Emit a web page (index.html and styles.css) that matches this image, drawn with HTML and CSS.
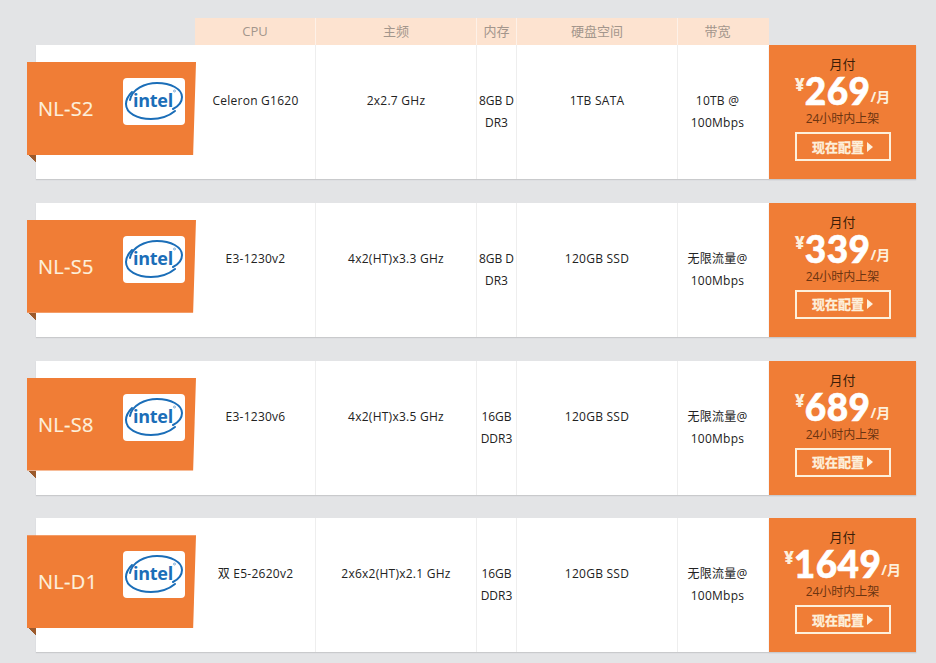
FILE: index.html
```html
<!DOCTYPE html>
<html lang="zh">
<head>
<meta charset="utf-8">
<title>服务器价格</title>
<link rel="stylesheet" href="styles.css">
</head>
<body>
<div class="head">
  <div class="h c1">CPU</div><div class="h c2">主频</div><div class="h c3">内存</div><div class="h c4">硬盘空间</div><div class="h c5">带宽</div>
</div>

<div class="row">
  <div class="lead"></div>
  <div class="ribbon"><span class="name">NL-S2</span>
    <svg class="logo" viewBox="0 0 62 47"><path class="sw" d="M7 22C9 11 22 5 34 5C48 5 59 11 59 19C59 24 56 28 50 31"/><path class="sw" d="M9 14C5 18 3 22 3 26C3 35 14 41 28 41C38 41 46 38 52 33"/><text class="it" x="30" y="29">intel</text><circle class="reg" cx="51.500" cy="13" r="1"/></svg>
  </div>
  <div class="cell c1"><p>Celeron G1620</p></div>
  <div class="cell c2"><p>2x2.7 GHz</p></div>
  <div class="cell c3"><p>8GB DDR3</p></div>
  <div class="cell c4"><p>1TB SATA</p></div>
  <div class="cell c5 last"><p>10TB @ 100Mbps</p></div>
  <div class="price">
    <div class="pay">月付</div>
    <div class="amt"><span class="yen">¥</span><span class="num">269</span><span class="per">/月</span></div>
    <div class="ship">24小时内上架</div>
    <a class="btn">现在配置<i class="tri"></i></a>
  </div>
</div>

<div class="row">
  <div class="lead"></div>
  <div class="ribbon"><span class="name">NL-S5</span>
    <svg class="logo" viewBox="0 0 62 47"><path class="sw" d="M7 22C9 11 22 5 34 5C48 5 59 11 59 19C59 24 56 28 50 31"/><path class="sw" d="M9 14C5 18 3 22 3 26C3 35 14 41 28 41C38 41 46 38 52 33"/><text class="it" x="30" y="29">intel</text><circle class="reg" cx="51.500" cy="13" r="1"/></svg>
  </div>
  <div class="cell c1"><p>E3-1230v2</p></div>
  <div class="cell c2"><p>4x2(HT)x3.3 GHz</p></div>
  <div class="cell c3"><p>8GB DDR3</p></div>
  <div class="cell c4"><p>120GB SSD</p></div>
  <div class="cell c5 last"><p>无限流量@ 100Mbps</p></div>
  <div class="price">
    <div class="pay">月付</div>
    <div class="amt"><span class="yen">¥</span><span class="num">339</span><span class="per">/月</span></div>
    <div class="ship">24小时内上架</div>
    <a class="btn">现在配置<i class="tri"></i></a>
  </div>
</div>

<div class="row">
  <div class="lead"></div>
  <div class="ribbon"><span class="name">NL-S8</span>
    <svg class="logo" viewBox="0 0 62 47"><path class="sw" d="M7 22C9 11 22 5 34 5C48 5 59 11 59 19C59 24 56 28 50 31"/><path class="sw" d="M9 14C5 18 3 22 3 26C3 35 14 41 28 41C38 41 46 38 52 33"/><text class="it" x="30" y="29">intel</text><circle class="reg" cx="51.500" cy="13" r="1"/></svg>
  </div>
  <div class="cell c1"><p>E3-1230v6</p></div>
  <div class="cell c2"><p>4x2(HT)x3.5 GHz</p></div>
  <div class="cell c3"><p>16GB DDR3</p></div>
  <div class="cell c4"><p>120GB SSD</p></div>
  <div class="cell c5 last"><p>无限流量@ 100Mbps</p></div>
  <div class="price">
    <div class="pay">月付</div>
    <div class="amt"><span class="yen">¥</span><span class="num">689</span><span class="per">/月</span></div>
    <div class="ship">24小时内上架</div>
    <a class="btn">现在配置<i class="tri"></i></a>
  </div>
</div>

<div class="row">
  <div class="lead"></div>
  <div class="ribbon"><span class="name">NL-D1</span>
    <svg class="logo" viewBox="0 0 62 47"><path class="sw" d="M7 22C9 11 22 5 34 5C48 5 59 11 59 19C59 24 56 28 50 31"/><path class="sw" d="M9 14C5 18 3 22 3 26C3 35 14 41 28 41C38 41 46 38 52 33"/><text class="it" x="30" y="29">intel</text><circle class="reg" cx="51.500" cy="13" r="1"/></svg>
  </div>
  <div class="cell c1"><p>双 E5-2620v2</p></div>
  <div class="cell c2"><p>2x6x2(HT)x2.1 GHz</p></div>
  <div class="cell c3"><p>16GB DDR3</p></div>
  <div class="cell c4"><p>120GB SSD</p></div>
  <div class="cell c5 last"><p>无限流量@ 100Mbps</p></div>
  <div class="price">
    <div class="pay">月付</div>
    <div class="amt"><span class="yen">¥</span><span class="num">1649</span><span class="per">/月</span></div>
    <div class="ship">24小时内上架</div>
    <a class="btn">现在配置<i class="tri"></i></a>
  </div>
</div>
</body>
</html>
```
FILE: styles.css
```css
* { box-sizing: border-box; }
html, body { margin: 0; padding: 0; }
body {
  width: 936px;
  height: 663px;
  overflow: hidden;
  padding-top: 18px;
  background: #e3e4e6;
  font-family: "Open Sans", "Noto Sans CJK SC", sans-serif;
  font-size: 12px;
  color: #222;
}
.head { display: flex; height: 27px; margin-left: 195px; }
.h {
  background: #fde3d0;
  border-right: 1px solid #fdf1e8;
  color: #a3968c;
  font-size: 13px;
  line-height: 27px;
  text-align: center;
}
.head .c1 { width: 121px; }
.head .c5 { border-right: 0; padding-right: 12px; }
.c2 { width: 161px; }
.c3 { width: 40px; }
.c4 { width: 161px; }
.c5 { width: 91px; }
.row {
  position: relative;
  display: flex;
  width: 880px;
  height: 134px;
  margin-left: 36px;
  margin-bottom: 23.75px;
  background: #fff;
  box-shadow: 0 1px 1px #c9cacc;
}
.lead { width: 160px; flex: none; }
.row .c1 { width: 120px; }
.cell {
  flex: none;
  border-right: 1px solid #eeeeee;
  padding-top: 45px;
  text-align: center;
  line-height: 22px;
  letter-spacing: 0.25px;
}
.cell.last { border-right: 0; padding-right: 12px; }
.cell p { margin: 0; word-break: break-all; }
.c5 p { word-break: normal; }
.c3 p { letter-spacing: 0; }
.ribbon {
  position: absolute;
  left: -9px;
  top: 17px;
  width: 170px;
  height: 100px;
  background:
    linear-gradient(45deg, transparent 6px, #9c5a2c 6px) 0 93px / 9px 7px no-repeat;
}
.ribbon::before {
  content: "";
  position: absolute;
  left: 0;
  top: 0;
  width: 169px;
  height: 93px;
  background: #f07d36;
  clip-path: polygon(0 0, 100% 0, 98.3% 100%, 0 100%);
}
.name {
  position: absolute;
  left: 11px;
  top: 33px;
  color: #fdf0dc;
  font-size: 20px;
  line-height: 28px;
  letter-spacing: 0.3px;
  -webkit-text-stroke: 0.2px #fdf0dc;
}
.logo {
  position: absolute;
  left: 96px;
  top: 16px;
  width: 62px;
  height: 47px;
  background: #fff;
  border-radius: 4px;
}
.sw { fill: none; stroke: #1b6eb8; stroke-width: 2; stroke-linecap: round; }
.reg { fill: none; stroke: #1b6eb8; stroke-width: 0.5; }
.it {
  fill: #1b6eb8;
  font-family: "Open Sans", sans-serif;
  font-size: 18px;
  font-weight: 700;
  letter-spacing: -0.3px;
  text-anchor: middle;
}
.price {
  flex: none;
  width: 147px;
  background: #f07d36;
  box-shadow: 0 1px 1px #c9cacc;
  display: flex;
  flex-direction: column;
  align-items: center;
  padding-top: 10px;
}
.pay { color: #3b1d08; font-size: 13px; line-height: 18px; }
.amt { display: flex; align-items: baseline; height: 36px; line-height: 36px; color: #fff; }
.yen { font-family: "Open Sans", sans-serif; font-weight: 800; font-size: 17px; position: relative; top: -14px; color: #fdf0dc; }
.num { font-family: Lato, sans-serif; font-weight: 900; font-size: 37px; letter-spacing: 0.4px; -webkit-text-stroke: 0.6px #fff; }
.per { position: relative; top: -3px; font-size: 14px; font-weight: 700; color: #fdf0dc; }
.ship { color: #6b3411; font-size: 12px; line-height: 20px; }
.btn {
  display: flex;
  align-items: center;
  justify-content: center;
  width: 96px;
  height: 29px;
  margin-top: 3px;
  border: 2px solid #fdf0dc;
  color: #fdf0dc;
  font-size: 13px;
  line-height: 20px;
  font-weight: 700;
  -webkit-text-stroke: 0.3px #fdf0dc;
}
.tri {
  width: 0;
  height: 0;
  margin-left: 3px;
  border-left: 6px solid #fdf0dc;
  border-top: 5px solid transparent;
  border-bottom: 5px solid transparent;
}
```
